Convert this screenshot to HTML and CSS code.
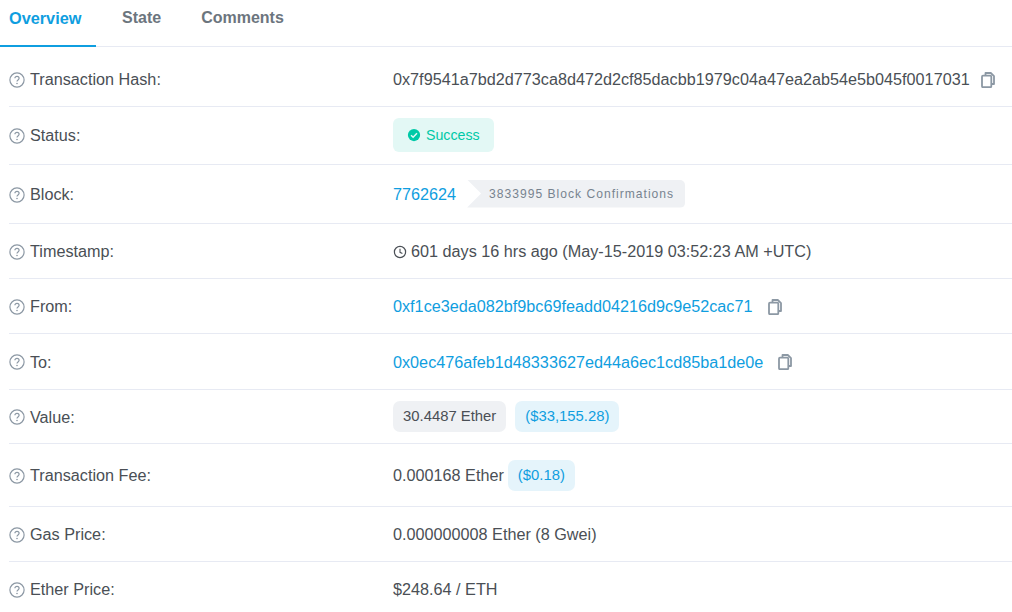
FILE: index.html
```html
<!DOCTYPE html>
<html lang="en">
<head>
<meta charset="utf-8">
<title>Transaction Details</title>
<link rel="stylesheet" href="styles.css">
</head>
<body>
<svg class="sprite" width="0" height="0" aria-hidden="true">
  <symbol id="q" viewBox="0 0 16 16">
    <circle cx="8" cy="8" r="7.1" fill="none" stroke="currentColor" stroke-width="1.2"/>
    <path d="M5.9 6.3c0-1.2.9-2 2.1-2s2.1.8 2.1 1.9c0 1.7-2.1 1.7-2.1 3.3" fill="none" stroke="currentColor" stroke-width="1.2"/>
    <circle cx="8" cy="11.5" r=".8" fill="currentColor"/>
  </symbol>
  <symbol id="copy" viewBox="0 0 14 16">
    <path d="M4.5 3.5V1h5.3L13 4.2V12h-2.5" fill="none" stroke="currentColor" stroke-width="1.8" stroke-linejoin="round"/>
    <rect x="1" y="3.7" width="9.3" height="11.5" rx="1" fill="none" stroke="currentColor" stroke-width="1.8"/>
  </symbol>
</svg>
<nav class="tabs">
  <a class="tab active">Overview</a>
  <a class="tab">State</a>
  <a class="tab">Comments</a>
</nav>
<main class="list">
  <div class="row h60 first">
    <div class="label"><svg class="qicon"><use href="#q"/></svg>Transaction Hash:</div>
    <div class="value">0x7f9541a7bd2d773ca8d472d2cf85dacbb1979c04a47ea2ab54e5b045f0017031<svg class="copy gap-hash"><use href="#copy"/></svg></div>
  </div>
  <div class="row h58 flush">
    <div class="label"><svg class="qicon"><use href="#q"/></svg>Status:</div>
    <div class="value">
      <span class="status">
        <svg class="check" viewBox="0 0 16 16"><circle cx="8" cy="8" r="7" fill="currentColor"/><path d="M4.6 8.2l2.4 2.3 4.4-4.6" fill="none" stroke="#e3f8f5" stroke-width="1.7"/></svg>Success
      </span>
    </div>
  </div>
  <div class="row h59">
    <div class="label"><svg class="qicon"><use href="#q"/></svg>Block:</div>
    <div class="value"><a class="link">7762624</a><span class="confirm">3833995 Block Confirmations</span></div>
  </div>
  <div class="row h55">
    <div class="label"><svg class="qicon"><use href="#q"/></svg>Timestamp:</div>
    <div class="value"><svg class="clock" viewBox="0 0 14 14"><circle cx="7" cy="7" r="5.6" fill="none" stroke="currentColor" stroke-width="1.2"/><path d="M7 3.8V7.3l2.4 1.2" fill="none" stroke="currentColor" stroke-width="1.1"/></svg>601 days 16 hrs ago (May-15-2019 03:52:23 AM +UTC)</div>
  </div>
  <div class="row h55">
    <div class="label"><svg class="qicon"><use href="#q"/></svg>From:</div>
    <div class="value"><a class="link">0xf1ce3eda082bf9bc69feadd04216d9c9e52cac71</a><svg class="copy gap-addr"><use href="#copy"/></svg></div>
  </div>
  <div class="row h56">
    <div class="label"><svg class="qicon"><use href="#q"/></svg>To:</div>
    <div class="value"><a class="link">0x0ec476afeb1d48333627ed44a6ec1cd85ba1de0e</a><svg class="copy gap-addr"><use href="#copy"/></svg></div>
  </div>
  <div class="row h54">
    <div class="label"><svg class="qicon"><use href="#q"/></svg>Value:</div>
    <div class="value flush"><span class="pill grey">30.4487 Ether</span><span class="pill blue wide">($33,155.28)</span></div>
  </div>
  <div class="row h63">
    <div class="label"><svg class="qicon"><use href="#q"/></svg>Transaction Fee:</div>
    <div class="value flush">0.000168 Ether<span class="pill blue near">($0.18)</span></div>
  </div>
  <div class="row h55">
    <div class="label"><svg class="qicon"><use href="#q"/></svg>Gas Price:</div>
    <div class="value">0.000000008 Ether (8 Gwei)</div>
  </div>
  <div class="row last flush">
    <div class="label"><svg class="qicon"><use href="#q"/></svg>Ether Price:</div>
    <div class="value">$248.64 / ETH</div>
  </div>
</main>
</body>
</html>
```
FILE: styles.css
```css
html, body { margin: 0; padding: 0; }
body {
  width: 1012px;
  height: 612px;
  overflow: hidden;
  background: #fff;
  color: #4a4f55;
  font-family: "Liberation Sans", Arial, sans-serif;
  font-size: 16.22px;
}
.sprite { position: absolute; }
.tabs {
  display: flex;
  height: 46px;
  border-bottom: 1px solid #e7eaf3;
  box-sizing: content-box;
}
.tab {
  padding: 9px 14px 0 26px;
  font-weight: 700;
  font-size: 16px;
  line-height: 18px;
  color: #6c757e;
  box-sizing: border-box;
  height: 47px;
}
.tab:first-child { padding-left: 9px; padding-right: 0; width: 96px; font-size: 16.3px; }
.tab.active { color: #0f9ee0; border-bottom: 2px solid #0f9ee0; }
.list { padding-left: 9px; }
.row {
  display: flex;
  align-items: center;
  border-bottom: 1px solid #e7eaf3;
  box-sizing: border-box;
}
.h54 { height: 54px; }
.h55 { height: 55px; }
.h56 { height: 56px; }
.h58 { height: 58px; }
.h59 { height: 59px; }
.h60 { height: 60px; }
.h63 { height: 63px; }
.last { height: 55px; border-bottom: 0; }
.label {
  width: 384px;
  flex: none;
  display: flex;
  align-items: center;
  color: #4a4f55;
  padding-top: 1px;
}
.qicon { width: 16px; height: 16px; margin-right: 5px; color: #8c98a4; flex: none; }
.value { display: flex; align-items: center; color: #4a4f55; white-space: nowrap; padding-top: 1px; }
.first .label, .first .value { padding-top: 6px; }
.flush .label, .flush .value, .value.flush { padding-top: 0; }
.link { color: #0f9ee0; }
.copy { width: 14px; height: 16px; color: #8c98a4; flex: none; }
.gap-hash { margin-left: 11px; }
.gap-addr { margin-left: 15px; }
.status {
  display: inline-flex;
  align-items: center;
  height: 34px;
  width: 101px;
  padding-left: 14px;
  box-sizing: border-box;
  background: #e3f8f5;
  color: #00c9a7;
  border-radius: 6px;
  font-size: 14.2px;
  margin-bottom: 2px;
}
.check { width: 14px; height: 14px; margin-right: 5px; color: #00c9a7; }
.confirm {
  display: inline-block;
  margin-left: 11px;
  margin-bottom: 2px;
  height: 28px;
  line-height: 28px;
  padding: 0 11px 0 22px;
  background: #eff1f4;
  color: #77838f;
  font-size: 12.1px;
  letter-spacing: 1px;
  border-radius: 0 5px 5px 0;
  clip-path: polygon(0 0, 100% 0, 100% 100%, 0 100%, 14px 50%);
}
.clock { width: 14px; height: 14px; margin-right: 4px; }
.pill {
  display: inline-block;
  height: 31px;
  line-height: 31px;
  border-radius: 7px;
  padding: 0 10px;
  box-sizing: border-box;
  font-size: 14.85px;
}
.grey { background: #eff1f4; }
.blue { background: #e5f4fb; color: #0f9ee0; }
.wide { margin-left: 9px; }
.near { margin-left: 4px; }
```
